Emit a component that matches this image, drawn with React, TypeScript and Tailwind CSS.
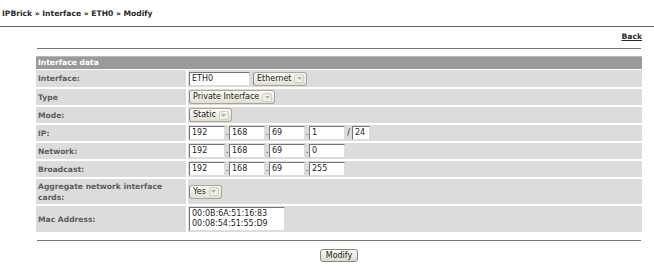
import React from "react";

const font = { fontFamily: '"DejaVu Sans", Verdana, sans-serif' };

function Select({ label }: { label: string }) {
  return (
    <span className="inline-flex items-center h-[14px] rounded-[3px] border border-[#aaa699] border-l-[#8c897d] bg-gradient-to-b from-[#fbfaf6] to-[#e2dfd2] pl-[3px] pr-[2px] text-[8px] leading-none text-[#222]">
      <span>{label}</span>
      <span className="ml-[3px] w-[10px] h-[9px] rounded-[2px] border border-[#d2cfc2] bg-[#efeee8] flex items-center justify-center">
        <svg width="5" height="3" viewBox="0 0 5 3"><path d="M0 0h5L2.5 3z" fill="#b4b1a4" /></svg>
      </span>
    </span>
  );
}

function Box({ v, w = 36 }: { v: string; w?: number }) {
  return (
    <span
      className="inline-flex items-center h-[14px] border border-[#767676] border-r-[#dcdcdc] border-b-[#dcdcdc] bg-white pl-[2px] text-[8px] leading-none text-[#222]"
      style={{ width: w }}
    >
      {v}
    </span>
  );
}

function Ip({ parts, mask }: { parts: string[]; mask?: string }) {
  return (
    <span className="inline-flex items-center">
      {parts.map((p, i) => (
        <React.Fragment key={i}>
          {i > 0 && <span className="w-[4px] text-center text-[8px] text-[#222]">.</span>}
          <Box v={p} />
        </React.Fragment>
      ))}
      {mask && (
        <>
          <span className="w-[7px] text-center text-[8px] text-[#222]">/</span>
          <Box v={mask} w={18} />
        </>
      )}
    </span>
  );
}

function Row({ label, children, h = 16 }: { label: React.ReactNode; children: React.ReactNode; h?: number }) {
  return (
    <>
      <div className="bg-[#dcdcdc] flex items-center pl-[2px] text-[7.6px] font-bold text-[#5c5c5c] leading-[11px] whitespace-nowrap" style={{ height: h }}>
        {label}
      </div>
      <div className="bg-[#dcdcdc] flex items-center pl-[1px]" style={{ height: h }}>
        {children}
      </div>
    </>
  );
}

export default function App() {
  return (
    <div className="w-[654px] h-[268px] bg-white overflow-hidden" style={font}>
      <div className="pl-[2px] pt-[9px] text-[7.6px] font-bold text-[#2a2a2a] leading-[10px]">
        IPBrick » Interface » ETH0 » Modify
      </div>
      <div className="mt-[7px] h-px bg-[#666]" />
      <div className="flex justify-end pr-[12px] pt-[5px]">
        <a className="text-[7.6px] font-bold text-[#2a2a2a] underline leading-[10px]">Back</a>
      </div>
      <div className="ml-[37px] mr-[13px] mt-[6px] h-px bg-[#777]" />
      <div className="ml-[36px] mr-[12px] mt-[7px]">
        <div className="h-[13px] bg-[#9a9a9a] border-t border-[#b8b8b8] pl-[2px] text-[7.6px] font-bold text-white leading-[12px]">
          Interface data
        </div>
        <div className="grid grid-cols-[150px_1fr] gap-[2px] pt-[1px] bg-white">
          <Row label="Interface:" h={17}>
            <span className="inline-flex items-center gap-[3px]">
              <Box v="ETH0" w={61} />
              <Select label="Ethernet" />
            </span>
          </Row>
          <Row label="Type">
            <Select label="Private Interface" />
          </Row>
          <Row label="Mode:">
            <Select label="Static" />
          </Row>
          <Row label="IP:">
            <Ip parts={["192", "168", "69", "1"]} mask="24" />
          </Row>
          <Row label="Network:">
            <Ip parts={["192", "168", "69", "0"]} />
          </Row>
          <Row label="Broadcast:">
            <Ip parts={["192", "168", "69", "255"]} />
          </Row>
          <Row label={<span>Aggregate network interface<br />cards:</span>} h={25}>
            <Select label="Yes" />
          </Row>
          <Row label="Mac Address:" h={26}>
            <div className="w-[96px] h-[24px] border border-[#767676] border-r-[#dcdcdc] border-b-[#dcdcdc] bg-white pl-[2px] pt-[1px] text-[8px] leading-[10px] text-[#222]">
              00:0B:6A:51:16:83
              <br />
              00:08:54:51:55:D9
            </div>
          </Row>
        </div>
      </div>
      <div className="ml-[37px] mr-[13px] mt-[8px] h-px bg-[#777]" />
      <div className="ml-[36px] mr-[12px] flex justify-center pt-[8px]">
        <span className="inline-flex items-center h-[13px] rounded-[3px] border border-[#8a877a] bg-gradient-to-b from-[#fbfaf6] to-[#dedbce] px-[5px] text-[8px] leading-none text-[#222]">
          Modify
        </span>
      </div>
    </div>
  );
}
